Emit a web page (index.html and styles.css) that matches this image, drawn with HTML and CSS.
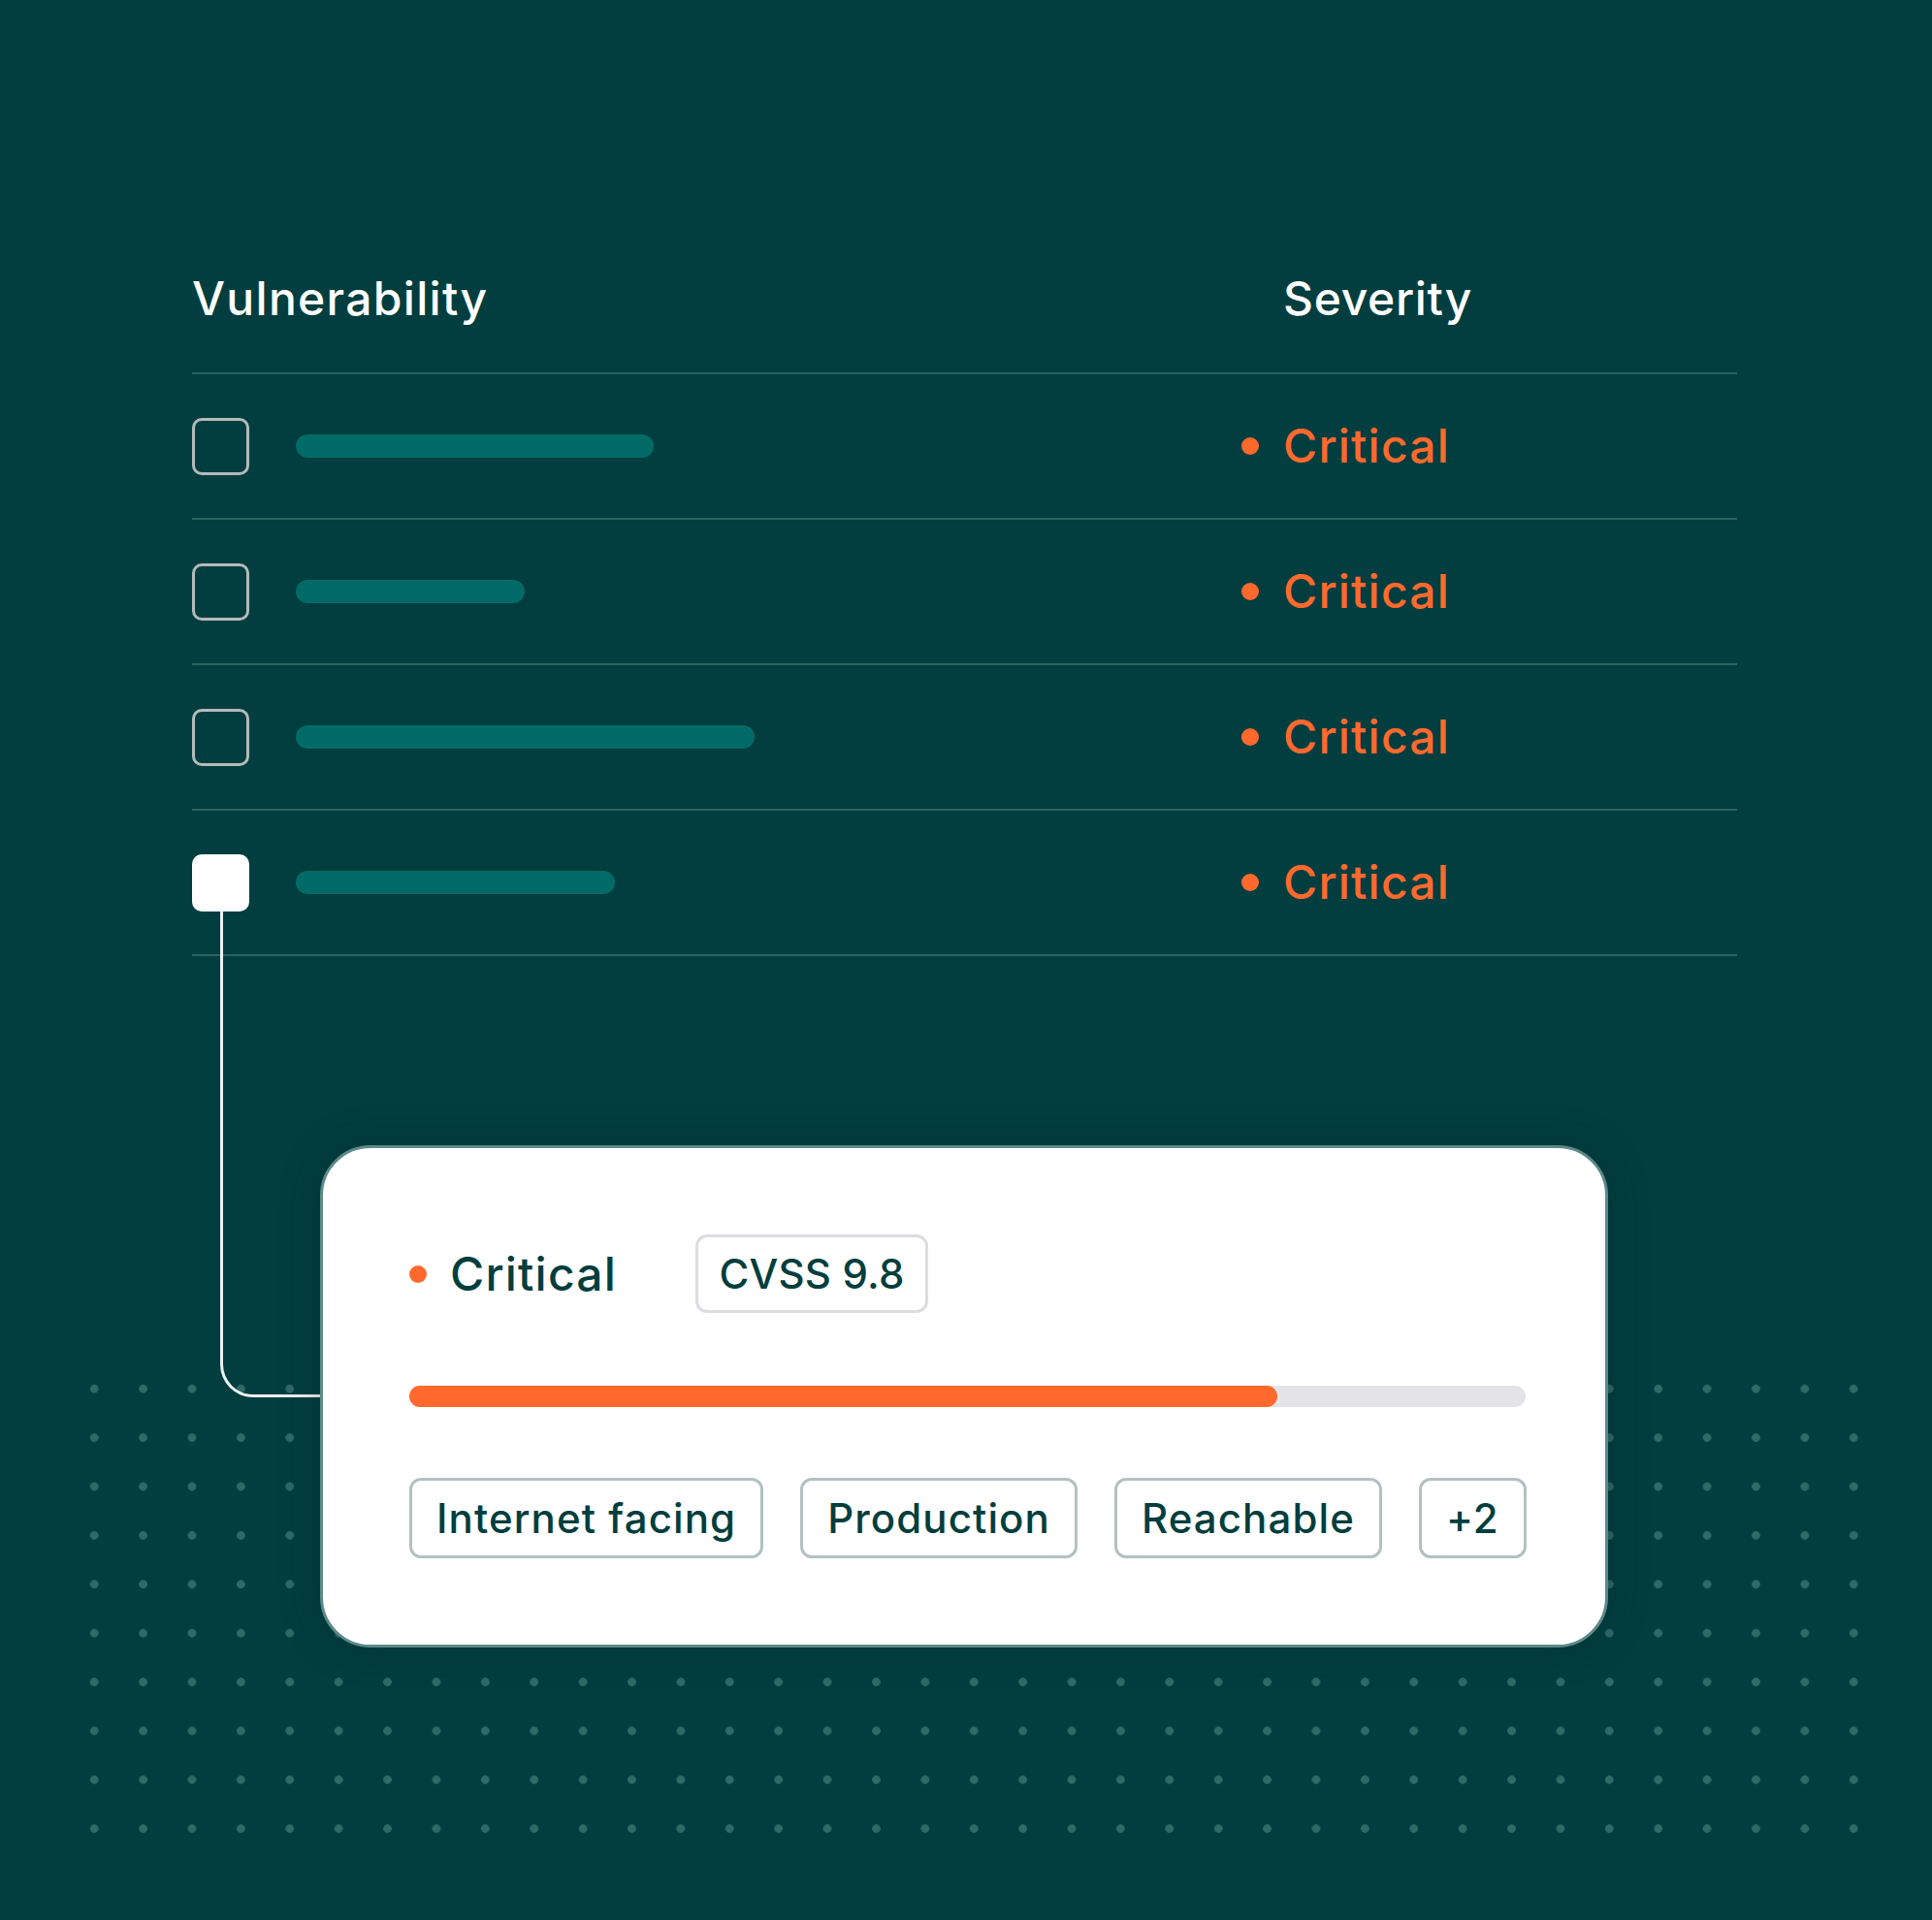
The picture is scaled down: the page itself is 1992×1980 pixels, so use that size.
FILE: index.html
```html
<!DOCTYPE html>
<html>

<head>
  <meta charset="utf-8" />
  <title>Vulnerabilities</title>
  <link rel="stylesheet" href="styles.css">
</head>

<body>
  <div class="page">
    <div class="dot-grid"></div>

    <div class="vuln-table">
      <div class="vuln-head">
        <div class="col-name">Vulnerability</div>
        <div class="col-sev">Severity</div>
      </div>
      <div class="vuln-row">
        <div class="col-name"><span class="check"></span><span class="skeleton" style="width: 369px"></span></div>
        <div class="sev"><span class="sev-dot"></span>Critical</div>
      </div>
      <div class="vuln-row">
        <div class="col-name"><span class="check"></span><span class="skeleton" style="width: 236px"></span></div>
        <div class="sev"><span class="sev-dot"></span>Critical</div>
      </div>
      <div class="vuln-row">
        <div class="col-name"><span class="check"></span><span class="skeleton" style="width: 473px"></span></div>
        <div class="sev"><span class="sev-dot"></span>Critical</div>
      </div>
      <div class="vuln-row">
        <div class="col-name"><span class="check checked"></span><span class="skeleton" style="width: 329px"></span></div>
        <div class="sev"><span class="sev-dot"></span>Critical</div>
      </div>
    </div>

    <div class="connector"></div>

    <div class="detail-card">
      <div class="detail-top">
        <div class="sev sev-dark"><span class="sev-dot"></span>Critical</div>
        <div class="score">CVSS 9.8</div>
      </div>
      <div class="meter">
        <div class="meter-fill" style="width: 77.8%"></div>
      </div>
      <div class="tags">
        <span class="tag">Internet facing</span>
        <span class="tag">Production</span>
        <span class="tag">Reachable</span>
        <span class="tag">+2</span>
      </div>
    </div>
  </div>
</body>

</html>
```

FILE: styles.css
```css
* {
  box-sizing: border-box;
}

html,
body {
  margin: 0;
  background-color: #023e3f;
}

body {
  font-family: Inter, "Open Sans", sans-serif;
  font-weight: 500;
  color: #ffffff;
}

.page {
  position: relative;
  width: 1992px;
  height: 1980px;
  padding: 284px 0 0 198px;
  overflow: hidden;
}

/* dotted backdrop below the card */
.dot-grid {
  position: absolute;
  left: 72px;
  top: 1407px;
  width: 1865px;
  height: 504px;
  background-image: radial-gradient(circle, #2f6968 4px, transparent 4.6px);
  background-size: 50.4px 50.4px;
}

.vuln-table {
  position: relative;
  width: 1593px;
}

.vuln-head,
.vuln-row {
  display: grid;
  grid-template-columns: 1082px 1fr;
  border-bottom: 2px solid #2c6262;
}

.vuln-head {
  font-size: 48px;
  line-height: 48px;
  padding-bottom: 52px;
  letter-spacing: 1.3px;
}

.vuln-head .col-sev {
  padding-left: 43px;
  letter-spacing: 0.7px;
}

.vuln-row {
  height: 150px;
  align-items: center;
}

.vuln-row .col-name {
  display: flex;
  align-items: center;
  gap: 48px;
}

.check {
  width: 59px;
  height: 59px;
  border: 3px solid #b4baba;
  border-radius: 10px;
}

.check.checked {
  background: #ffffff;
  border-color: #ffffff;
}

.skeleton {
  height: 24px;
  border-radius: 12px;
  background: #026b67;
}

.sev {
  display: flex;
  align-items: center;
  gap: 25px;
  font-size: 48px;
  line-height: 48px;
  color: #ff692e;
  letter-spacing: 1.2px;
}

.sev-dot {
  width: 18px;
  height: 18px;
  border-radius: 50%;
  background: #ff692e;
}

.connector {
  position: absolute;
  left: 227px;
  top: 940px;
  width: 104px;
  height: 501px;
  border-left: 3px solid #eef2f2;
  border-bottom: 3px solid #eef2f2;
  border-bottom-left-radius: 34px;
}

.detail-card {
  position: relative;
  margin: 195px 0 0 132px;
  width: 1328px;
  height: 518px;
  padding: 89px 82px 0 89px;
  background: #ffffff;
  border: 3px solid #5e8989;
  border-radius: 52px;
  box-shadow: 0 0 40px rgba(0, 35, 36, 0.3);
  color: #033e3e;
}

.detail-top {
  display: flex;
  align-items: center;
  height: 81px;
}

.sev-dark {
  color: #033e3e;
  gap: 24px;
  width: 295px;
}

.score {
  display: flex;
  align-items: center;
  justify-content: center;
  width: 240px;
  height: 81px;
  border: 3px solid #dddce1;
  border-radius: 12px;
  font-size: 42px;
  letter-spacing: 0.2px;
}

.meter {
  margin-top: 75px;
  height: 22px;
  border-radius: 11px;
  background: #e4e3e7;
}

.meter-fill {
  height: 100%;
  border-radius: 11px;
  background: #ff692e;
}

.tags {
  display: flex;
  gap: 38px;
  margin-top: 73px;
}

.tag {
  display: flex;
  align-items: center;
  flex-shrink: 0;
  height: 83px;
  padding: 0 25px;
  border: 3px solid #b3c1c0;
  border-radius: 12px;
  font-size: 42px;
  letter-spacing: 1.1px;
  white-space: nowrap;
}
```
